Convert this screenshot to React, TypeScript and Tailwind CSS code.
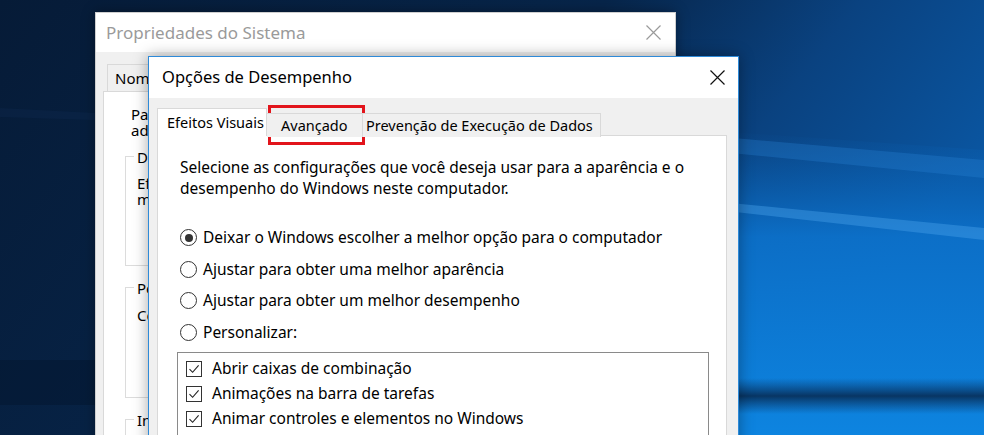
import { ReactNode } from "react";

const font = "font-['Noto_Sans','Liberation_Sans',sans-serif]";

function Wallpaper() {
  return (
    <svg className="absolute inset-0" width="984" height="435" viewBox="0 0 984 435">
      <defs>
        <linearGradient id="base" x1="0" y1="0" x2="1" y2="0.35">
          <stop offset="0" stopColor="#061b37" />
          <stop offset="0.55" stopColor="#07254a" />
          <stop offset="0.78" stopColor="#0a4280" />
          <stop offset="1" stopColor="#0a55a0" />
        </linearGradient>
        <linearGradient id="glow" x1="0" y1="0" x2="0" y2="1">
          <stop offset="0" stopColor="#0b64b8" stopOpacity="0" />
          <stop offset="0.35" stopColor="#0c72cc" stopOpacity="0.9" />
          <stop offset="1" stopColor="#0d84e0" stopOpacity="1" />
        </linearGradient>
        <linearGradient id="band" x1="0" y1="0" x2="0" y2="1">
          <stop offset="0" stopColor="#0a3e74" stopOpacity="0" />
          <stop offset="0.5" stopColor="#083563" stopOpacity="1" />
          <stop offset="1" stopColor="#0a3e74" stopOpacity="0" />
        </linearGradient>
      </defs>
      <rect width="984" height="435" fill="url(#base)" />
      <polygon points="700,130 984,150 984,435 700,435" fill="url(#glow)" />
      <polygon points="700,135 984,160 984,178 700,150" fill="#2a86d6" opacity="0.3" />
      <polygon points="700,200 984,228 984,240 700,208" fill="#4aa6ee" opacity="0.4" />
      <rect x="700" y="378" width="284" height="36" fill="url(#band)" />
      <polygon points="0,108 95,113 95,120 0,117" fill="#1a3f6e" opacity="0.15" />
      <rect x="0" y="360" width="95" height="45" fill="#03132a" opacity="0.4" />
    </svg>
  );
}

function CloseX({ color }: { color: string }) {
  return (
    <svg width="15" height="15" viewBox="0 0 15 15">
      <path d="M0.5 0.5 L14.5 14.5 M14.5 0.5 L0.5 14.5" stroke={color} strokeWidth="1.2" fill="none" />
    </svg>
  );
}

function GroupBox({ label, children, height }: { label: string; children: ReactNode; height: string }) {
  return (
    <div className={`relative border border-[#dcdcdc] ${height}`}>
      <span className="absolute -top-[11px] left-[8px] bg-white px-[3px] text-[15px] text-black">{label}</span>
      <div className="pl-[11px] pt-[18px] text-[15px] leading-[16px] text-black">{children}</div>
    </div>
  );
}

function BackWindow() {
  return (
    <div className="absolute left-[95px] top-[12px] flex h-[440px] w-[581px] flex-col border border-[#cfcfcf] bg-[#f0f0f0] shadow-[0_0_12px_rgba(0,0,0,0.35)]">
      <div className="flex h-[43px] items-center justify-between bg-white pl-[10px] pr-[14px]">
        <span className="text-[17px] text-[#9a9a9a]">Propriedades do Sistema</span>
        <CloseX color="#9a9a9a" />
      </div>
      <div className="flex flex-col px-[7px] pt-[12px]">
        <div className="flex pl-[4px]">
          <div className="flex h-[27px] items-center border border-b-0 border-[#d9d9d9] bg-[#f0f0f0] px-[7px] text-[15px] text-black">
            Nome do Computador
          </div>
        </div>
        <div className="h-[360px] border border-[#d9d9d9] bg-white px-[21px] pt-[14px]">
          <p className="pl-[6px] text-[15px] leading-[16px] text-black">
            Para fazer a maioria destas alterações, faça logon como
            <br />
            administrador.
          </p>
          <div className="mt-[18px] flex flex-col gap-[21px]">
            <GroupBox label="Desempenho" height="h-[110px]">
              Efeitos visuais, agendamento do processador, uso de
              <br />
              memória e memória virtual
            </GroupBox>
            <GroupBox label="Perfis de Usuário" height="h-[111px]">
              <span className="block pt-[1px]">Configurações da área de trabalho relativas à sua conexão</span>
            </GroupBox>
            <GroupBox label="Inicialização e Recuperação" height="h-[60px]">
              Inicialização do sistema
            </GroupBox>
          </div>
        </div>
      </div>
    </div>
  );
}

function Radio({ checked, label }: { checked?: boolean; label: string }) {
  return (
    <div className="flex h-[31.6px] items-center">
      <span className="flex h-[17px] w-[17px] items-center justify-center rounded-full border-[1.5px] border-[#333333] bg-white">
        {checked && <span className="h-[8px] w-[8px] rounded-full bg-[#333333]" />}
      </span>
      <span className="ml-[6px] text-[15.5px] text-black">{label}</span>
    </div>
  );
}

function Check({ label }: { label: string }) {
  return (
    <div className="flex h-[25px] items-center">
      <span className="flex h-[16px] w-[16px] items-center justify-center border border-[#333333] bg-white">
        <svg width="12" height="12" viewBox="0 0 12 12">
          <path d="M1.5 6.2 L4.6 9.3 L10.6 2.4" stroke="#222" strokeWidth="1.1" fill="none" />
        </svg>
      </span>
      <span className="ml-[10px] text-[15.5px] text-black">{label}</span>
    </div>
  );
}

function FrontWindow() {
  return (
    <div className="absolute left-[148px] top-[56px] flex h-[400px] w-[591px] flex-col border border-[#2e8ad8] bg-[#f0f0f0] shadow-[0_0_14px_rgba(0,0,0,0.35)]">
      <div className="flex h-[43px] items-center justify-between bg-white pl-[13px] pr-[13px]">
        <span className="text-[16.5px] text-black">Opções de Desempenho</span>
        <CloseX color="#111111" />
      </div>
      <div className="flex flex-col pl-[8px] pr-[11px] pt-[10px]">
        <div className="relative z-10 flex items-end">
          <div className="flex h-[28px] w-[110px] items-center border border-b-0 border-[#d9d9d9] bg-white pl-[9px] text-[14.5px] text-black">
            Efeitos Visuais
          </div>
          <div className="-mb-px flex h-[24px] w-[96px] items-center border border-b-0 border-l-0 border-[#d9d9d9] bg-[#f0f0f0] pl-[14px] text-[14.5px] text-black">
            Avançado
          </div>
          <div className="-mb-px flex h-[24px] w-[238px] items-center border border-b-0 border-l-0 border-[#d9d9d9] bg-[#f0f0f0] pl-[3px] text-[14.5px] text-black">
            Prevenção de Execução de Dados
          </div>
        </div>
        <div className="-mt-px h-[320px] border border-[#d9d9d9] bg-white pl-[22px] pt-[21px]">
          <p className="text-[15.5px] leading-[21px] text-black">
            Selecione as configurações que você deseja usar para a aparência e o
            <br />
            desempenho do Windows neste computador.
          </p>
          <div className="mt-[23px] flex flex-col">
            <Radio checked label="Deixar o Windows escolher a melhor opção para o computador" />
            <Radio label="Ajustar para obter uma melhor aparência" />
            <Radio label="Ajustar para obter um melhor desempenho" />
            <Radio label="Personalizar:" />
          </div>
          <div className="-ml-[3px] mt-[4px] h-[120px] w-[532px] border border-[#8a8a8a] pl-[8px] pt-[3px]">
            <Check label="Abrir caixas de combinação" />
            <Check label="Animações na barra de tarefas" />
            <Check label="Animar controles e elementos no Windows" />
          </div>
        </div>
      </div>
    </div>
  );
}

export default function App() {
  return (
    <div className={`relative h-[435px] w-[984px] overflow-hidden bg-[#061b37] ${font}`}>
      <Wallpaper />
      <BackWindow />
      <FrontWindow />
      <div className="absolute left-[268px] top-[105px] h-[40px] w-[97px] border-[3px] border-[#e2141b]" />
    </div>
  );
}
